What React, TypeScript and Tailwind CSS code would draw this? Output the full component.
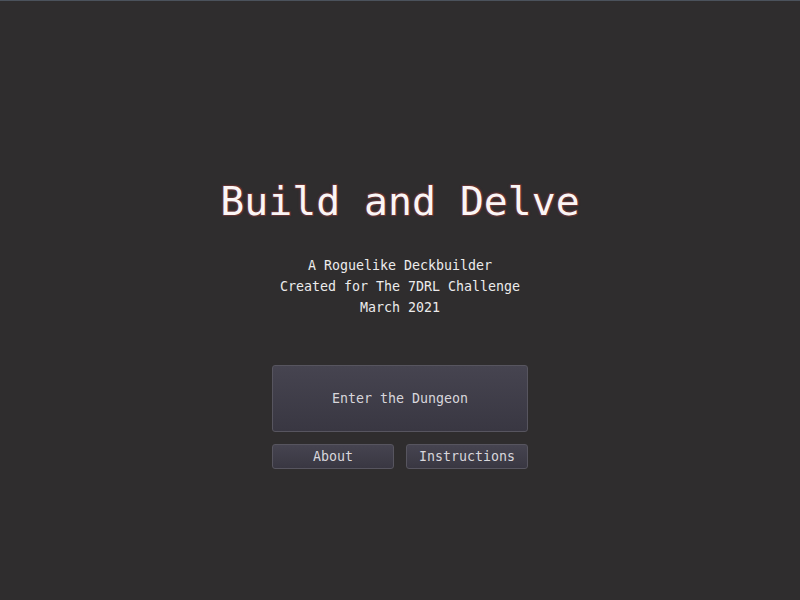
const mono = "font-['DejaVu_Sans_Mono','Liberation_Mono',monospace]";

function MenuButton({ label, big }: { label: string; big?: boolean }) {
  return (
    <button
      className={`${mono} flex items-center justify-center rounded-[3px] border border-[#57555f] bg-gradient-to-b from-[#464450] to-[#393742] text-[13.3px] text-[#d8d6dc] ${
        big ? "h-[67px] w-[256px]" : "h-[25px] w-[122px]"
      }`}
    >
      {label}
    </button>
  );
}

export default function App() {
  return (
    <div className="h-[600px] w-[800px] border-t border-[#4b525c] bg-[#2f2d2e]">
      <div className="flex flex-col items-center pt-[176px]">
        <h1
          className={`${mono} text-[39.8px] leading-[48px] text-[#fbf5f5] [text-shadow:1px_1px_0_#5e3232,-1px_-1px_0_#5e3232,1px_-1px_0_#5e3232,-1px_1px_0_#5e3232,0_0_3px_#6e3636]`}
        >
          Build and Delve
        </h1>
        <div
          className={`${mono} mt-[30px] flex flex-col items-center text-[13.3px] leading-[21px] text-[#ecebec]`}
        >
          <p>A Roguelike Deckbuilder</p>
          <p>Created for The 7DRL Challenge</p>
          <p>March 2021</p>
        </div>
        <div className="mt-[47px] flex flex-col gap-[12px]">
          <MenuButton label="Enter the Dungeon" big />
          <div className="flex gap-[12px]">
            <MenuButton label="About" />
            <MenuButton label="Instructions" />
          </div>
        </div>
      </div>
    </div>
  );
}
